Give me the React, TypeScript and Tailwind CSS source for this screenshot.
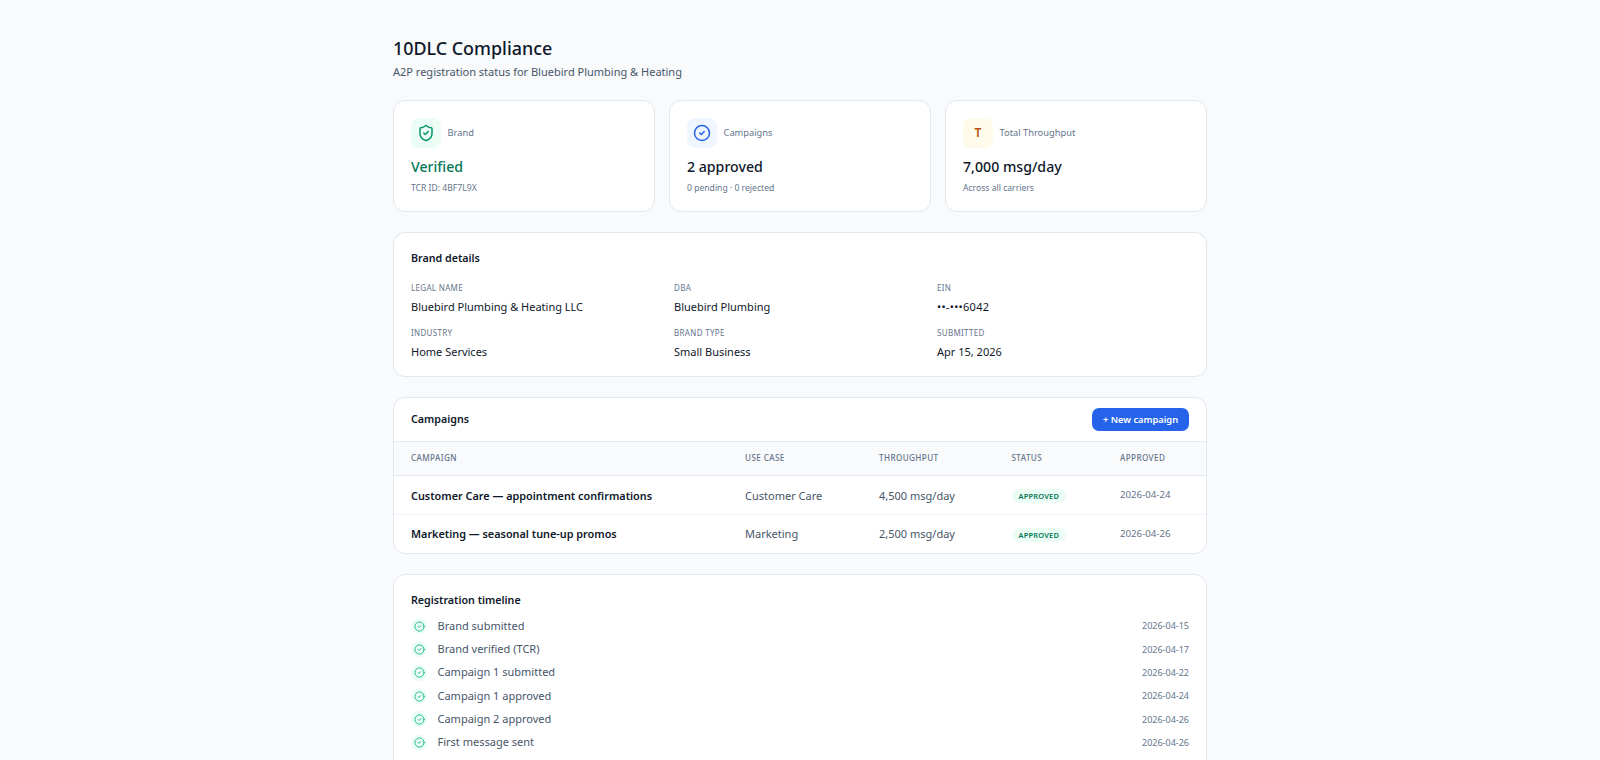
import { ShieldCheck, CircleCheck } from "lucide-react";

const font = { fontFamily: '"Noto Sans", sans-serif' };

function Stat({ icon, bg, label, value, valueClass, sub }: { icon: React.ReactNode; bg: string; label: string; value: string; valueClass: string; sub: string }) {
  return (
    <div className="bg-white border border-[#e2e8f0] rounded-[12px] h-[112px] px-[17px] pt-[17px]">
      <div className="flex items-center gap-[6.5px]">
        <div className={`w-[30px] h-[30px] rounded-[8px] flex items-center justify-center ${bg}`}>{icon}</div>
        <span className="text-[9.3px] text-[#64748b]">{label}</span>
      </div>
      <div className={`text-[14.15px] font-[550] leading-[21px] mt-[8px] ${valueClass}`}>{value}</div>
      <div className="text-[8.6px] text-[#64748b] leading-[13px] mt-[5px]">{sub}</div>
    </div>
  );
}

function Field({ label, value, wide }: { label: string; value: string; wide?: boolean }) {
  return (
    <div>
      <div className="text-[8px] tracking-[0.04em] text-[#64748b] uppercase leading-[12px]">{label}</div>
      <div className={`text-[11px] text-[#0f172a] leading-[17px] mt-[4px] ${wide ? "tracking-[0.3px]" : ""}`}>{value}</div>
    </div>
  );
}

const th = "text-left font-medium text-[8.1px] tracking-[0.05em] uppercase text-[#64748b] pl-[17px] p-0";

function Row({ name, use, tp, date }: { name: string; use: string; tp: string; date: string }) {
  return (
    <tr className="h-[38.5px] border-t border-[#f1f5f9]">
      <td className="pl-[17px] pt-[2px] text-[10.85px] font-semibold text-[#0f172a]">{name}</td>
      <td className="pl-[17px] pt-[2px] text-[11px] text-[#475569]">{use}</td>
      <td className="pl-[17px] pt-[2px] text-[11px] text-[#475569]">{tp}</td>
      <td className="pl-[17px] pt-[2px] align-middle">
        <span className="flex w-fit bg-[#ecfdf5] text-[#047857] rounded-full px-[7px] text-[7.4px] font-semibold tracking-[0.03em] leading-[14px]">APPROVED</span>
      </td>
      <td className="pl-[17px] pt-[2px] text-[9.7px] text-[#64748b]">{date}</td>
    </tr>
  );
}

const timeline = [
  ["Brand submitted", "2026-04-15"],
  ["Brand verified (TCR)", "2026-04-17"],
  ["Campaign 1 submitted", "2026-04-22"],
  ["Campaign 1 approved", "2026-04-24"],
  ["Campaign 2 approved", "2026-04-26"],
  ["First message sent", "2026-04-26"],
];

export default function App() {
  return (
    <div className="min-h-[760px] bg-[#f8fafc]" style={font}>
      <div className="w-[814px] mx-auto pt-[34px] pb-[32px]">
        <h1 className="text-[17.9px] font-[550] text-[#0f172a] leading-[28px]">10DLC Compliance</h1>
        <p className="text-[11px] text-[#475569] leading-[17px] mt-[1px]">A2P registration status for Bluebird Plumbing &amp; Heating</p>

        <div className="grid grid-cols-3 gap-[14px] mt-[20px]">
          <Stat bg="bg-[#ecfdf5]" icon={<ShieldCheck size={18} className="text-[#059669]" />} label="Brand" value="Verified" valueClass="text-[#047857]" sub="TCR ID: 4BF7L9X" />
          <Stat bg="bg-[#eff6ff]" icon={<CircleCheck size={18} className="text-[#2563eb]" />} label="Campaigns" value="2 approved" valueClass="text-[#0f172a]" sub="0 pending · 0 rejected" />
          <Stat bg="bg-[#fffbeb]" icon={<span className="text-[12px] font-semibold text-[#b45309]">T</span>} label="Total Throughput" value="7,000 msg/day" valueClass="text-[#0f172a]" sub="Across all carriers" />
        </div>

        <div className="bg-white border border-[#e2e8f0] rounded-[12px] mt-[20px] h-[145px] px-[17px] pt-[17px]">
          <h2 className="text-[10.7px] font-semibold text-[#0f172a] leading-[17px]">Brand details</h2>
          <div className="grid grid-cols-[263px_263px_1fr] gap-y-[12px] mt-[15px]">
            <Field label="Legal name" value="Bluebird Plumbing & Heating LLC" />
            <Field label="DBA" value="Bluebird Plumbing" />
            <Field label="EIN" value="••-•••6042" wide />
            <Field label="Industry" value="Home Services" />
            <Field label="Brand type" value="Small Business" />
            <Field label="Submitted" value="Apr 15, 2026" />
          </div>
        </div>

        <div className="bg-white border border-[#e2e8f0] rounded-[12px] mt-[20px] overflow-hidden">
          <div className="flex items-center justify-between h-[43px] px-[17px]">
            <h2 className="text-[10.7px] font-semibold text-[#0f172a]">Campaigns</h2>
            <button className="h-[23px] w-[97px] rounded-[7px] bg-[#2563eb] text-white text-[9.3px] font-semibold">+ New campaign</button>
          </div>
          <table className="w-full table-fixed border-collapse">
            <colgroup>
              <col className="w-[334px]" />
              <col className="w-[134px]" />
              <col className="w-[132.5px]" />
              <col className="w-[108.5px]" />
              <col />
            </colgroup>
            <thead>
              <tr className="h-[34px] bg-[#f8fafc] border-y border-[#e2e8f0]">
                <th className={th}>Campaign</th>
                <th className={th}>Use case</th>
                <th className={th}>Throughput</th>
                <th className={th}>Status</th>
                <th className={th}>Approved</th>
              </tr>
            </thead>
            <tbody>
              <Row name="Customer Care — appointment confirmations" use="Customer Care" tp="4,500 msg/day" date="2026-04-24" />
              <Row name="Marketing — seasonal tune-up promos" use="Marketing" tp="2,500 msg/day" date="2026-04-26" />
            </tbody>
          </table>
        </div>

        <div className="bg-white border border-[#e2e8f0] rounded-[12px] mt-[20px] px-[17px] pt-[17px] pb-[17px]">
          <h2 className="text-[10.7px] font-semibold text-[#0f172a] leading-[17px]">Registration timeline</h2>
          <div className="mt-[6px]">
            {timeline.map(([t, d]) => (
              <div key={t} className="flex items-center h-[23.3px]">
                <div className="w-[16px] h-[16px] rounded-full bg-[#ecfdf5] flex items-center justify-center">
                  <CircleCheck size={11} className="text-[#10b981]" />
                </div>
                <span className="text-[11px] text-[#475569] ml-[10.5px] flex-1">{t}</span>
                <span className="text-[9px] text-[#64748b]">{d}</span>
              </div>
            ))}
          </div>
        </div>
      </div>
    </div>
  );
}
